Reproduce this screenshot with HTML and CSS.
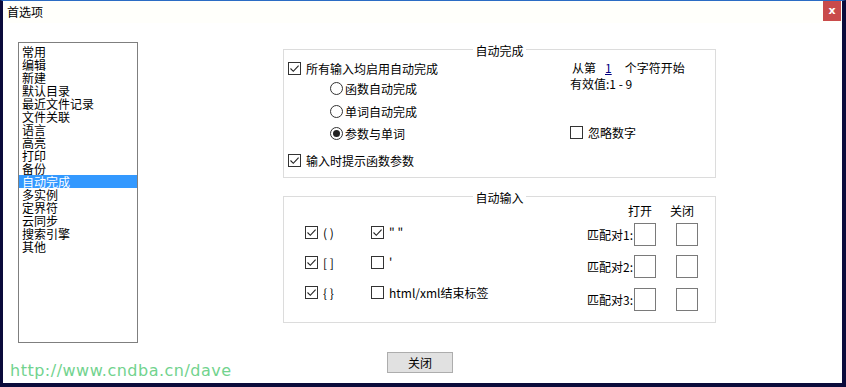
FILE: index.html
```html
<!DOCTYPE html>
<html lang="zh-CN">
<head>
<meta charset="utf-8">
<title>首选项</title>
<link rel="stylesheet" href="styles.css">
</head>
<body>
<div class="window">
  <div class="titlebar">
    <span class="title">首选项</span>
    <span class="close">x</span>
  </div>
  <div class="main">
    <ul class="nav">
      <li>常用</li>
      <li>编辑</li>
      <li>新建</li>
      <li>默认目录</li>
      <li>最近文件记录</li>
      <li>文件关联</li>
      <li>语言</li>
      <li>高亮</li>
      <li>打印</li>
      <li>备份</li>
      <li class="sel">自动完成</li>
      <li>多实例</li>
      <li>定界符</li>
      <li>云同步</li>
      <li>搜索引擎</li>
      <li>其他</li>
    </ul>
    <div class="panel">
      <div class="group g1">
        <div class="legend"><span>自动完成</span></div>
        <div class="g1-body">
          <div class="col-left">
            <div class="row"><span class="cb"><svg viewBox="0 0 11 11"><path d="M1.5 5.5 L4.3 8.3 L9.6 2.6"/></svg></span>所有输入均启用自动完成</div>
            <div class="row indent r2"><span class="rd"></span>函数自动完成</div>
            <div class="row indent r3"><span class="rd"></span>单词自动完成</div>
            <div class="row indent r4"><span class="rd on"><i></i></span>参数与单词</div>
            <div class="row r5"><span class="cb"><svg viewBox="0 0 11 11"><path d="M1.5 5.5 L4.3 8.3 L9.6 2.6"/></svg></span>输入时提示函数参数</div>
          </div>
          <div class="col-right">
            <div class="start"><span class="from">从第</span><span class="num">1</span><span class="rest">个字符开始</span></div>
            <div class="valid">有效值:1 - 9</div>
            <div class="row ignore"><span class="cb"></span>忽略数字</div>
          </div>
        </div>
      </div>
      <div class="group g2">
        <div class="legend"><span>自动输入</span></div>
        <div class="g2-body">
          <div class="ai-left">
            <div class="row"><span class="cb"><svg viewBox="0 0 11 11"><path d="M1.5 5.5 L4.3 8.3 L9.6 2.6"/></svg></span>( )</div>
            <div class="row"><span class="cb"><svg viewBox="0 0 11 11"><path d="M1.5 5.5 L4.3 8.3 L9.6 2.6"/></svg></span>" "</div>
            <div class="row"><span class="cb"><svg viewBox="0 0 11 11"><path d="M1.5 5.5 L4.3 8.3 L9.6 2.6"/></svg></span>[ ]</div>
            <div class="row"><span class="cb"></span>'</div>
            <div class="row"><span class="cb"><svg viewBox="0 0 11 11"><path d="M1.5 5.5 L4.3 8.3 L9.6 2.6"/></svg></span>{ }</div>
            <div class="row"><span class="cb"></span>html/xml结束标签</div>
          </div>
          <div class="ai-right">
            <span></span>
            <span class="h-open">打开</span>
            <span class="h-close">关闭</span>
            <span class="plabel">匹配对1:</span>
            <span class="box"></span>
            <span class="box b2"></span>
            <span class="plabel m2">匹配对2:</span>
            <span class="box m2"></span>
            <span class="box b2 m2"></span>
            <span class="plabel m3">匹配对3:</span>
            <span class="box m3"></span>
            <span class="box b2 m3"></span>
          </div>
        </div>
      </div>
    </div>
  </div>
  <div class="footer">
    <span class="url">http://www.cndba.cn/dave</span>
    <span class="btn">关闭</span>
  </div>
</div>
</body>
</html>
```

FILE: styles.css
```css
* { box-sizing: border-box; margin: 0; padding: 0; }
html, body { width: 846px; height: 387px; overflow: hidden; background: #fff; }
body {
  font-family: "Noto Sans CJK SC", "Microsoft YaHei", sans-serif;
  font-size: 12px;
  color: #000;
}
.window {
  width: 846px;
  height: 387px;
  display: flex;
  flex-direction: column;
  background: #fff;
  border-top: 1px solid #2b6cc4;
  border-left: 3px solid #0b0b3b;
  border-right: 4px solid #0b0b3b;
  border-bottom: 4px solid #0b0b3b;
}
.titlebar {
  height: 22px;
  display: flex;
  justify-content: space-between;
  align-items: center;
  padding-left: 4px;
  background: #fffffb;
}
.title { line-height: 16px; }
.close {
  align-self: flex-start;
  width: 18px;
  height: 20px;
  margin-right: 1px;
  background: #c94b4b;
  color: #fff;
  font: bold 11px/19px "DejaVu Sans", sans-serif;
  text-align: center;
}
.main {
  display: flex;
  align-items: flex-start;
  margin-top: 19px;
  padding-left: 15px;
}
.nav {
  list-style: none;
  width: 120px;
  height: 301px;
  flex-shrink: 0;
  border: 1px solid #7f7f7f;
  padding-top: 2px;
}
.nav li {
  height: 13px;
  line-height: 13px;
  padding-left: 3px;
  white-space: nowrap;
}
.nav li.sel { background: #3399ff; color: #fff; }
.panel {
  margin-left: 145px;
  padding-top: 7px;
  width: 433px;
}
.group {
  width: 433px;
  border: 1px solid #dcdcdc;
}
.g1 { height: 129px; }
.g2 { height: 127px; margin-top: 18px; }
.legend {
  display: flex;
  justify-content: center;
  height: 16px;
  margin-top: -7px;
}
.legend span {
  background: #fff;
  padding: 0 2px;
  line-height: 16px;
}
.row {
  display: flex;
  align-items: center;
  height: 18px;
  white-space: nowrap;
}
.cb {
  width: 13px;
  height: 13px;
  flex-shrink: 0;
  border: 1px solid #333;
  background: #fff;
  margin-right: 5px;
  display: flex;
}
.cb svg { width: 11px; height: 11px; }
.cb path { fill: none; stroke: #222; stroke-width: 1.1; }
.rd {
  width: 13px;
  height: 13px;
  flex-shrink: 0;
  border: 1px solid #333;
  border-radius: 50%;
  margin-right: 2px;
  display: flex;
  align-items: center;
  justify-content: center;
}
.rd i {
  width: 7px;
  height: 7px;
  border-radius: 50%;
  background: #222;
}
.g1-body { display: flex; padding-left: 4px; }
.col-left { width: 282px; flex-shrink: 0; }
.indent { padding-left: 42px; }
.r2 { margin-top: 2px; }
.r3 { margin-top: 5px; }
.r4 { margin-top: 4px; }
.r5 { margin-top: 9px; }
.col-right { padding-top: 1px; }
.start {
  display: flex;
  height: 16px;
  line-height: 16px;
  white-space: nowrap;
}
.from { padding-left: 2px; }
.num {
  margin-left: 9px;
  color: #00007f;
  text-decoration: underline;
}
.rest { margin-left: 13px; }
.valid {
  height: 16px;
  line-height: 16px;
  white-space: nowrap;
}
.ignore { margin-top: 31px; }
.g2-body { display: flex; align-items: flex-start; }
.ai-left {
  display: grid;
  grid-template-columns: 66px auto;
  grid-auto-rows: 18px;
  row-gap: 12px;
  margin-left: 21px;
  margin-top: 17px;
}
.ai-right {
  display: grid;
  grid-template-columns: auto 22px 42px;
  row-gap: 4px;
  margin-left: auto;
  margin-right: 17px;
  margin-top: -3px;
}
.h-open, .h-close {
  height: 16px;
  line-height: 16px;
  white-space: nowrap;
}
.h-open { justify-self: start; margin-left: -6px; }
.h-close { justify-self: end; margin-right: 4px; }
.plabel {
  align-self: center;
  justify-self: end;
  white-space: nowrap;
  line-height: 16px;
  margin-right: 1px;
}
.box {
  width: 22px;
  height: 23px;
  border: 1px solid #7a7a7a;
  background: #fff;
}
.b2 { justify-self: end; }
.m2 { margin-top: 5px; }
.m3 { margin-top: 6px; }
.footer {
  display: flex;
  align-items: flex-start;
  padding-left: 7px;
}
.url {
  width: 377px;
  flex-shrink: 0;
  margin-top: 18px;
  font-family: "DejaVu Sans", sans-serif;
  font-size: 16px;
  line-height: 20px;
  letter-spacing: 0.5px;
  color: #72d38e;
  white-space: nowrap;
}
.btn {
  margin-top: 9px;
  width: 66px;
  height: 21px;
  display: flex;
  align-items: center;
  justify-content: center;
  background: #e1e1e1;
  border: 1px solid #adadad;
}
```
